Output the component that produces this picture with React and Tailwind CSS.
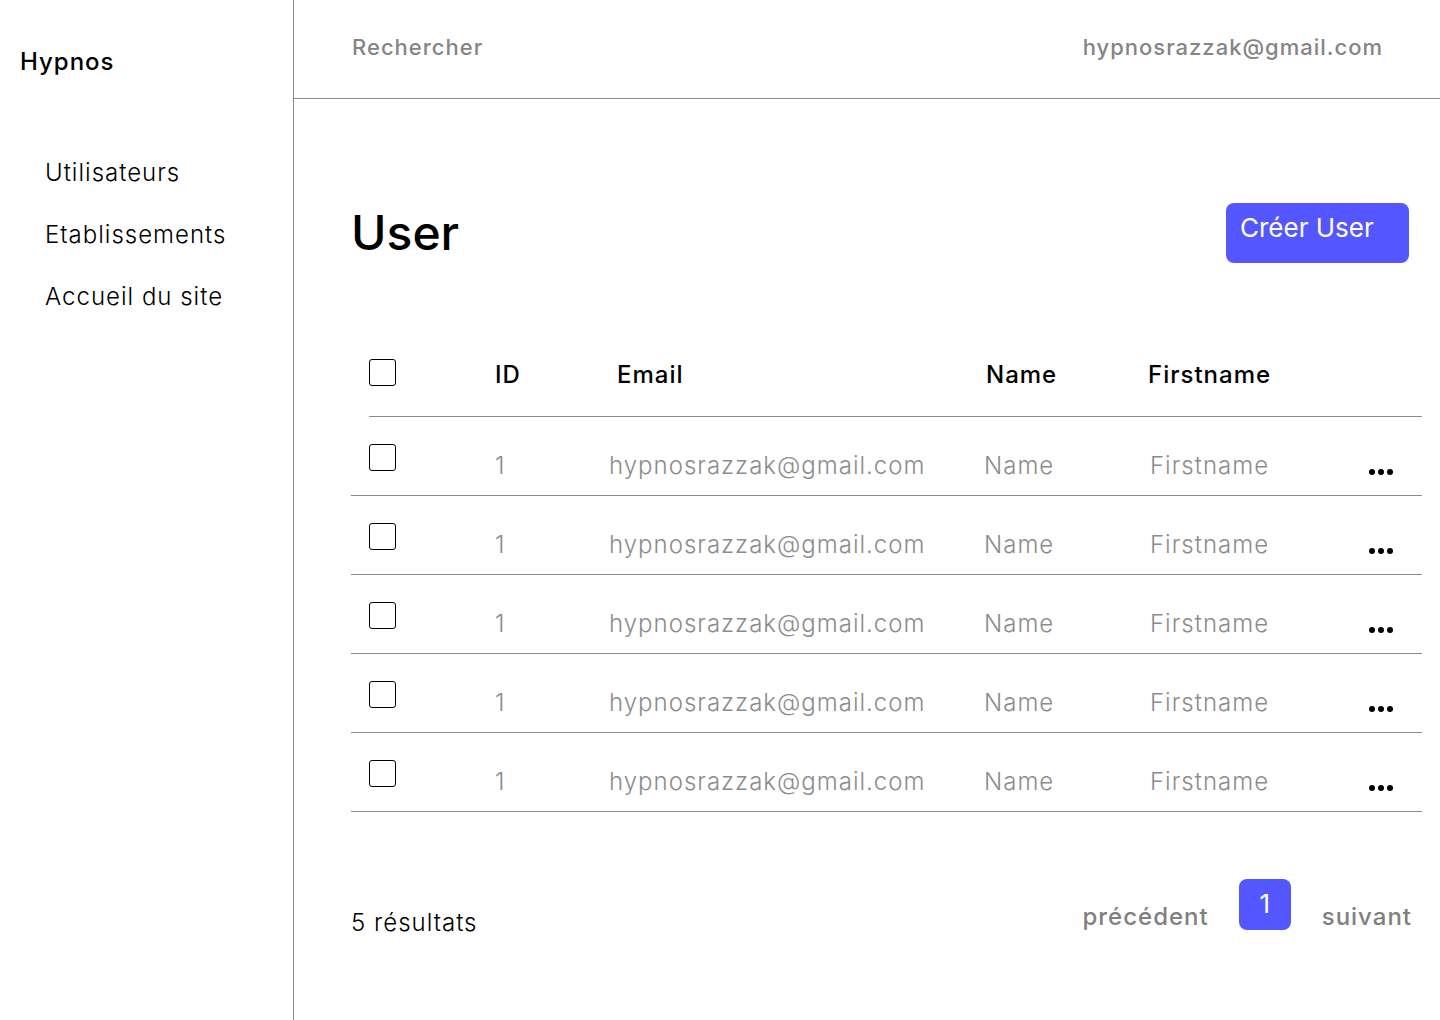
import React from 'react';

const rows = [1, 2, 3, 4, 5].map(() => ({
  id: 1,
  email: 'hypnosrazzak@gmail.com',
  name: 'Name',
  firstname: 'Firstname',
}));

function Checkbox() {
  return <div className="w-[27px] h-[27px] shrink-0 rounded-[3px] border-[1.5px] border-black bg-white" />;
}

function Dots() {
  return (
    <div className="flex gap-[3px]">
      <span className="w-[6px] h-[6px] rounded-full bg-black" />
      <span className="w-[6px] h-[6px] rounded-full bg-black" />
      <span className="w-[6px] h-[6px] rounded-full bg-black" />
    </div>
  );
}

export default function App() {
  return (
    <div className="flex min-h-[1020px] w-[1440px] bg-white text-black font-['Inter','Liberation_Sans',sans-serif]">
      {/* Sidebar */}
      <aside className="w-[294px] shrink-0 border-r border-[#8a8a8a]">
        <div className="pl-[20px] pt-[47px] text-[24px] leading-[30px] font-medium tracking-[1px]">Hypnos</div>
        <nav className="pl-[45px] pt-[81px] flex flex-col gap-[32px] text-[24px] leading-[30px] font-light tracking-[1px]">
          <a>Utilisateurs</a>
          <a>Etablissements</a>
          <a>Accueil du site</a>
        </nav>
      </aside>

      {/* Main */}
      <main className="flex-1">
        <header className="h-[99px] border-b border-[#8a8a8a] flex items-start justify-between pl-[58px] pr-[57px] pt-[32px] text-[22px] leading-[30px] font-medium tracking-[1px] text-[#858585]">
          <span>Rechercher</span>
          <span>hypnosrazzak@gmail.com</span>
        </header>

        <div className="pl-[57px] pr-[18px]">
          <div className="mt-[104px] flex items-center justify-between">
            <h1 className="text-[48px] leading-[56px] font-medium">User</h1>
            <button className="mr-[13px] w-[183px] h-[60px] rounded-[8px] bg-[#5457ff] text-white text-[26px] leading-[32px] text-left pl-[14px] pb-[10px]">
              Créer User
            </button>
          </div>

          {/* Table */}
          <div className="mt-[96px]">
            <div className="ml-[18px] flex items-center h-[27px] text-[24px] leading-[30px] font-medium tracking-[1px]">
              <div className="w-[126px]"><Checkbox /></div>
              <div className="w-[122px] pt-[4px]">ID</div>
              <div className="w-[369px] pt-[4px]">Email</div>
              <div className="w-[162px] pt-[4px]">Name</div>
              <div className="pt-[4px]">Firstname</div>
            </div>
            <div className="ml-[18px] mt-[30px] border-b border-[#8a8a8a]" />

            {rows.map((r, i) => (
              <div key={i} className="h-[79px] border-b border-[#8a8a8a] flex items-start pt-[27px] text-[24px] leading-[30px] font-light tracking-[1px] text-[#8c8c8c]">
                <div className="pl-[18px] w-[144px]"><Checkbox /></div>
                <div className="w-[114px] mt-[7px]">{r.id}</div>
                <div className="w-[375px] mt-[7px]">{r.email}</div>
                <div className="w-[166px] mt-[7px]">{r.name}</div>
                <div className="w-[219px] mt-[7px]">{r.firstname}</div>
                <div className="mt-[25px]"><Dots /></div>
              </div>
            ))}
          </div>

          {/* Footer */}
          <div className="mt-[67px] flex items-start justify-between">
            <span className="mt-[29px] text-[24px] leading-[30px] font-light tracking-[1px]">5 résultats</span>
            <div className="mr-[10px] flex items-start">
              <span className="mt-[23px] text-[24px] leading-[30px] font-medium tracking-[1px] text-[#808080]">précédent</span>
              <button className="ml-[30px] w-[52px] h-[51px] rounded-[8px] bg-[#5457ff] text-white text-[26px] leading-[32px] pb-[2px]">1</button>
              <span className="ml-[31px] mt-[23px] text-[24px] leading-[30px] font-medium tracking-[1px] text-[#808080]">suivant</span>
            </div>
          </div>
        </div>
      </main>
    </div>
  );
}
